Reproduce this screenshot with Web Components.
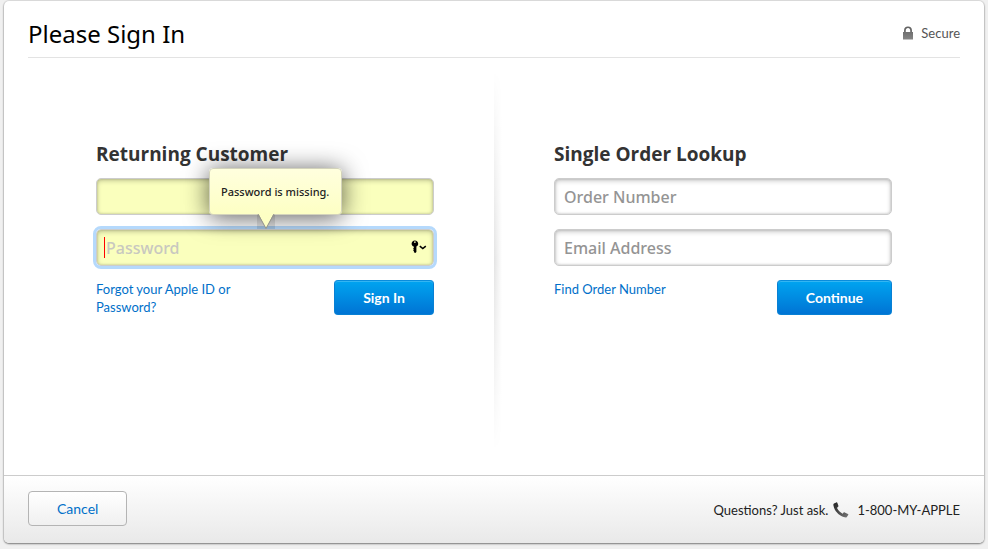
<!DOCTYPE html>
<html lang="en">
<head>
<meta charset="utf-8">
<title>Please Sign In</title>
<style>
  html { height: 100%; }
  body {
    margin: 0;
    min-height: 100%;
    box-sizing: border-box;
    padding: 1px 4px 6px;
    display: flex;
    background: #f0f0f0;
    color: #333;
    font-family: Lato, "Liberation Sans", sans-serif;
    font-size: 13px;
    line-height: 18px;
  }
</style>
</head>
<body>
<sign-in-page>
  <page-header slot="header" heading="Please Sign In"></page-header>
  <lookup-card slot="start" heading="Returning Customer">
    <text-field label="Apple ID" type="text" filled></text-field>
    <text-field label="Password" placeholder="Password" type="password" filled active>
      <error-bubble slot="bubble">Password is missing.</error-bubble>
    </text-field>
    <text-link slot="link">Forgot your Apple ID or Password?</text-link>
    <push-button slot="action">Sign In</push-button>
  </lookup-card>
  <lookup-card slot="end" heading="Single Order Lookup">
    <text-field label="Order Number" placeholder="Order Number" type="text"></text-field>
    <text-field label="Email Address" placeholder="Email Address" type="email"></text-field>
    <text-link slot="link">Find Order Number</text-link>
    <push-button slot="action">Continue</push-button>
  </lookup-card>
  <page-footer slot="footer">
    <push-button plain>Cancel</push-button>
    <span slot="question">Questions? Just ask.</span>
    <span slot="phone">1-800-MY-APPLE</span>
  </page-footer>
</sign-in-page>

<script>
const wide = '"Noto Sans", "Open Sans", sans-serif';

class ShadowElement extends HTMLElement {
  constructor() {
    super();
    this.attachShadow({ mode: 'open' });
  }
  connectedCallback() {
    this.shadowRoot.innerHTML = this.render();
  }
  attr(name) {
    return this.getAttribute(name) || '';
  }
}

customElements.define('sign-in-page', class extends ShadowElement {
  render() {
    return `
      <style>
        :host {
          flex: 1; display: flex; flex-direction: column; min-width: 0;
          background: #fff; border-radius: 5px;
          box-shadow: 0 0 1px 1px rgba(0,0,0,.08), 0 1px 2px rgba(0,0,0,.45);
        }
        main { flex: 1; display: grid; grid-template-columns: 1fr 2px 1fr; padding: 12px 23px 24px; }
        .divider {
          width: 8px; margin-left: 1px;
          background: linear-gradient(90deg, #e4e4e4, #fff);
          -webkit-mask-image: linear-gradient(transparent, #000 50%, transparent);
          mask-image: linear-gradient(transparent, #000 50%, transparent);
        }
      </style>
      <slot name="header"></slot>
      <main>
        <slot name="start"></slot>
        <div class="divider"></div>
        <slot name="end"></slot>
      </main>
      <slot name="footer"></slot>`;
  }
});

customElements.define('page-header', class extends ShadowElement {
  render() {
    return `
      <style>
        :host { display: block; padding: 0 24px; }
        header {
          display: flex; justify-content: space-between; align-items: center;
          height: 57px; padding-top: 8px; box-sizing: border-box;
          border-bottom: 1px solid #e3e3e3;
        }
        h1 { margin: 0; padding-top: 2px; font: 400 24px/32px ${wide}; color: #000; }
        .secure { display: flex; align-items: center; gap: 8px; color: #555; }
        svg { display: block; }
      </style>
      <header>
        <h1>${this.attr('heading')}</h1>
        <span class="secure">
          <svg width="10" height="14" viewBox="0 0 10 14" aria-hidden="true">
            <defs><linearGradient id="g" x2="0" y2="1"><stop stop-color="#606060"/><stop offset="1" stop-color="#858585"/></linearGradient></defs>
            <path fill="url(#g)" fill-rule="evenodd" d="M1 6V4.400C1 2 2.500.5 5 .5S9 2 9 4.400V6h1v7.500H0V6zM2.800 6h4.400V4.500C7.200 3 6.400 2.100 5 2.100S2.800 3 2.800 4.500z"/>
          </svg>
          Secure
        </span>
      </header>`;
  }
});

customElements.define('lookup-card', class extends ShadowElement {
  render() {
    return `
      <style>
        :host { display: block; padding: 72px 59px 0 69px; min-width: 0; }
        :host([slot="end"]) { padding: 72px 69px 0 59px; }
        form { display: flex; flex-direction: column; gap: 14px; }
        h2 { margin: 0 0 -2px; font: 700 19px/24px "Open Sans", sans-serif; color: #333; }
        .row { display: flex; justify-content: space-between; align-items: flex-start; gap: 16px; }
        .link { max-width: 150px; }
      </style>
      <form>
        <h2>${this.attr('heading')}</h2>
        <slot></slot>
        <div class="row">
          <div class="link"><slot name="link"></slot></div>
          <slot name="action"></slot>
        </div>
      </form>`;
  }
});

customElements.define('text-field', class extends ShadowElement {
  render() {
    const key = this.hasAttribute('active') ? `
      <button type="button" aria-label="Saved passwords">
        <svg width="16" height="14" viewBox="0 0 16 14" aria-hidden="true">
          <path fill-rule="evenodd" d="M3.800.5C5.800.5 7.200 1.800 7.200 3.700 7.200 5 6.500 6 5.400 6.500V12L4.300 13 2.900 12.200V11L2 10.200 2.900 9.500 2 8.700 2.800 7.900V6.600C1.500 6 .600 5 .600 3.700.600 1.800 2 .5 3.800.5zM3 1.500v1.300h1.700V1.500z"/>
          <path fill="none" stroke="#000" stroke-width="1.600" d="M8.800 6.200 11.800 8.600 14.800 6.200"/>
        </svg>
      </button>` : '';
    return `
      <style>
        :host { display: block; position: relative; }
        input {
          display: block; width: 100%; height: 37px; box-sizing: border-box; margin: 0;
          padding: 1px 9px 0; border: 1px solid #ccc; border-radius: 5px; outline: 0;
          background: #fff; color: #333;
          font: 500 16px/24px ${wide};
          box-shadow: inset 0 2px 5px rgba(0,0,0,.2), inset 0 0 2px 1px rgba(0,0,0,.1);
        }
        input::placeholder { color: #949494; opacity: 1; }
        :host([filled]) input { background: #faffbd; }
        :host([active]) input {
          background: linear-gradient(#f00, #f00) 7px 50% / 1px 21px no-repeat #faffbd;
          outline: 3px solid #b5d9fc; outline-offset: 0;
        }
        :host([active]) input::placeholder { color: #c8c8c0; }
        button {
          position: absolute; right: 7px; top: 11px; padding: 0; border: 0; background: none;
        }
        svg { display: block; }
      </style>
      <input type="${this.attr('type')}" aria-label="${this.attr('label')}" placeholder="${this.attr('placeholder')}">
      ${key}
      <slot name="bubble"></slot>`;
  }
});

customElements.define('error-bubble', class extends ShadowElement {
  render() {
    return `
      <style>
        :host {
          position: absolute; left: 113px; bottom: calc(100% + 14px);
          padding: 14px 12px 14px 11px; border: 1px solid #d3d3bb; border-radius: 4px;
          background: linear-gradient(#ffffde, #fdffc4);
          color: #222; font: 500 11px/17px ${wide}; white-space: nowrap;
          box-shadow: 0 2px 24px rgba(0,0,0,.65);
        }
        svg { position: absolute; left: 47px; top: calc(100% - 1px); }
      </style>
      <slot></slot>
      <svg width="18" height="17" viewBox="0 0 18 17" aria-hidden="true">
        <path fill="#000" opacity=".1" d="M0 2H18V16H0z"/>
        <path fill="#fdffc4" d="M1 0H17L9 15z"/>
        <path fill="none" stroke="#96968c" d="M1 1 9 15.500 17 1"/>
      </svg>`;
  }
});

customElements.define('text-link', class extends ShadowElement {
  render() {
    return `
      <style>
        :host { display: block; }
        a { color: #0070c9; text-decoration: none; }
      </style>
      <a href="#"><slot></slot></a>`;
  }
});

customElements.define('push-button', class extends ShadowElement {
  render() {
    return `
      <style>
        :host { display: block; flex: none; }
        button {
          display: block; height: 35px; margin: 0; padding: 0 28px;
          border: 1px solid #0880d4; border-top-color: #0a8cdc; border-radius: 4px;
          background: linear-gradient(#00a4f0, #0074d4);
          box-shadow: inset 0 1px rgba(255,255,255,.2);
          color: #fff; font: 700 14px/18px Lato, "Liberation Sans", sans-serif;
        }
        :host([plain]) button {
          border-color: #b4b4b4; background: linear-gradient(#fff, #f0f0f0);
          color: #0070c9; font-weight: 400; box-shadow: none;
        }
      </style>
      <button type="button"><slot></slot></button>`;
  }
});

customElements.define('page-footer', class extends ShadowElement {
  render() {
    return `
      <style>
        :host { display: block; }
        footer {
          display: flex; justify-content: space-between; align-items: center;
          padding: 15px 24px 17px; border-top: 1px solid #ccc;
          border-radius: 0 0 5px 5px;
          background: linear-gradient(#fff, #e9e9e9);
        }
        .help { display: flex; align-items: center; gap: 5px; color: #222; padding-top: 2px; }
        .phone { margin-left: 3px; }
        svg { display: block; }
      </style>
      <footer>
        <slot></slot>
        <div class="help">
          <slot name="question"></slot>
          <svg width="16" height="16" viewBox="0 0 16 16" aria-hidden="true">
            <defs><linearGradient id="p" x2="1" y2="1"><stop stop-color="#222"/><stop offset="1" stop-color="#777"/></linearGradient></defs>
            <path fill="url(#p)" d="M1 1.500 3.200.4C3.800.2 4.200.4 4.400.9L5.400 3.800C5.500 4.300 5.400 4.600 5 4.900L4 5.700C4.900 8.200 7 10.400 9.700 11.700L10.600 10.600C10.900 10.200 11.300 10.200 11.700 10.400L14.900 11.900C15.400 12.200 15.500 12.600 15.200 13L13.800 14.900C13.300 15.500 12.500 15.500 11.700 15.300 6 14 1.200 8.800.4 3.200.3 2.400.400 1.900 1 1.500z"/>
          </svg>
          <span class="phone"><slot name="phone"></slot></span>
        </div>
      </footer>`;
  }
});
</script>
</body>
</html>
